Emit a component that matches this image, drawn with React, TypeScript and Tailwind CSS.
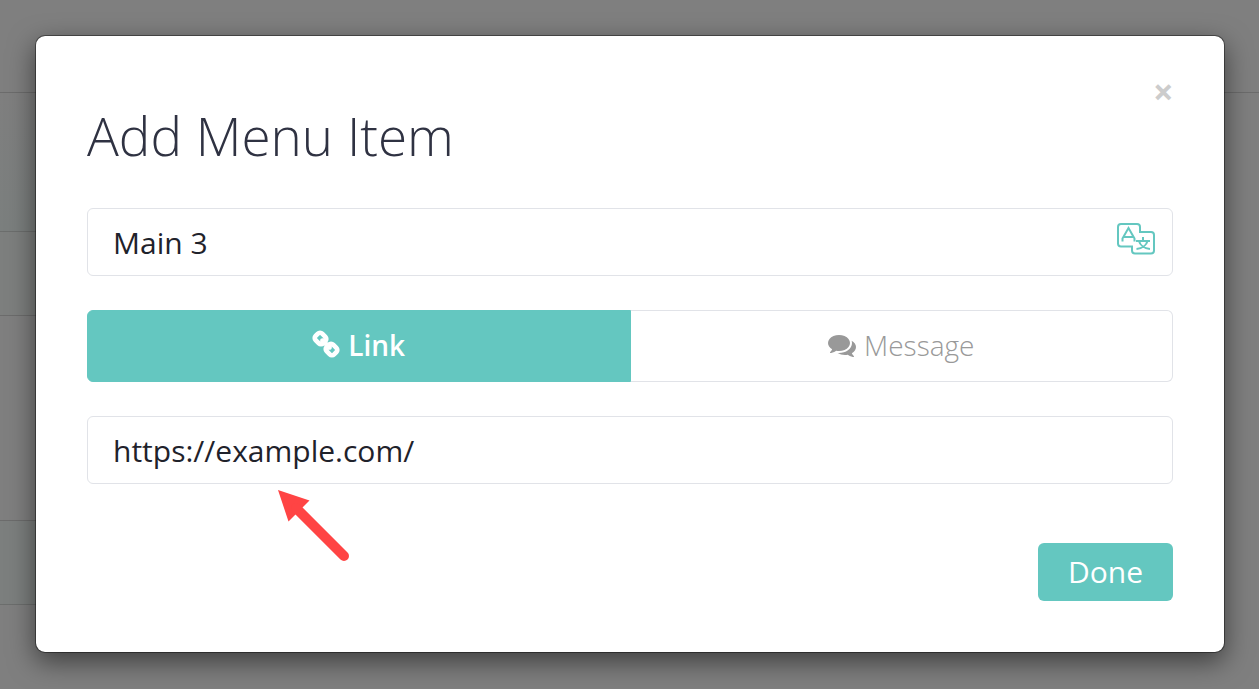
import { useState } from "react"
import type { ReactNode } from "react"
import { clsx } from "clsx"

type ItemType = "link" | "message"

const fieldClass =
  "h-17 w-full rounded-md border border-[#e1e3e8] bg-white pl-[25px] pr-20 text-3xl text-[#1f222b] outline-none"

function LinkIcon() {
  return (
    <svg viewBox="0 0 1792 1792" className="size-7 overflow-visible fill-current stroke-current" strokeWidth="110" aria-hidden="true">
      <path d="M1520 1216q0-40-28-68l-208-208q-28-28-68-28-42 0-72 32 3 3 19 18.5t21.5 21.5 15 19 13 25.5 3.5 27.5q0 40-28 68t-68 28q-15 0-27.5-3.5t-25.5-13-19-15-21.5-21.5-18.5-19q-33 31-33 73 0 40 28 68l206 207q27 27 68 27 40 0 68-26l147-146q28-28 28-67zm-703-705q0-40-28-68l-206-207q-28-28-68-28-39 0-68 27l-147 146q-28 28-28 67 0 40 28 68l208 208q27 27 68 27 42 0 72-31-3-3-19-18.5t-21.5-21.5-15-19-13-25.5-3.5-27.5q0-40 28-68t68-28q15 0 27.5 3.5t25.5 13 19 15 21.5 21.5 18.5 19q33-31 33-73zm895 705q0 120-85 203l-147 146q-83 83-203 83-121 0-204-85l-206-207q-83-83-83-203 0-123 88-209l-88-88q-86 88-208 88-120 0-204-84l-208-208q-84-84-84-204t85-203l147-146q83-83 203-83 121 0 204 85l206 207q83 83 83 203 0 123-88 209l88 88q86-88 208-88 120 0 204 84l208 208q84 84 84 204z" />
    </svg>
  )
}

function CommentsIcon() {
  return (
    <svg viewBox="0 0 1792 1792" className="size-7 fill-current" aria-hidden="true">
      <path d="M1408 768q0 139-94 257t-256.5 186.5-353.5 68.5q-86 0-176-16-124 88-278 128-36 9-86 16h-3q-11 0-20.5-8t-11.5-21q-1-3-1-6.5t.5-6.5 2-6l2.5-5 3.5-5.5 4-5 4.500-5 4-4.500q5-6 23-25t26-29.500 22.500-29 25-38.500 20.500-44q-124-72-195-177t-71-224q0-139 94-257t256.500-186.500 353.500-68.500 353.500 68.500 256.500 186.500 94 257zm384 256q0 120-71 224.500t-195 176.500q10 24 20.500 44t25 38.500 22.500 29 26 29.500 23 25q1 1 4 4.500t4.500 5 4 5 3.500 5.500l2.500 5 2 6 .5 6.500-1 6.500q-3 14-13 22t-22 7q-50-7-86-16-154-40-278-128-90 16-176 16-271 0-472-132 58 4 88 4 161 0 309-45t264-129q125-92 192-212t67-254q0-77-23-152 129 71 204 178t75 230z" />
    </svg>
  )
}

function TranslateIcon() {
  return (
    <svg viewBox="0 0 38 32" className="h-8 w-[38px]" fill="none" stroke="currentColor" strokeWidth="2" aria-hidden="true">
      <path d="M15 23.5H4a3 3 0 0 1-3-3V4a3 3 0 0 1 3-3h16a3 3 0 0 1 3 3v5h11a3 3 0 0 1 3 3v15.500a3 3 0 0 1-3 3H18a3 3 0 0 1-3-3z" />
      <path d="M5.500 18.500v-3L11.500 5l6 10.500v3M7 14h9" strokeWidth="2" />
      <path d="M26 14v3M19 18h14M22 18c1 4 5 7.500 11 8M30.500 18c-1 4-5 7.500-11 8" strokeWidth="2" />
    </svg>
  )
}

// Rows of the page left behind the modal
function PageBehind() {
  return (
    <div className="absolute inset-0 overflow-hidden bg-[#7f7f7f]" aria-hidden="true">
      <div className="h-[93px] border-b border-[#6c6c6c]" />
      <div className="w-1/2">
        <div className="h-[139px] border-b border-[#6c6e6d] bg-linear-to-b from-[#7f7f7f] to-[#7b7f7e]" />
        <div className="h-21 border-b border-[#6c6c6c] bg-[#7d7f7e]" />
        <div className="h-[205px] border-b border-[#6c6c6c]" />
        <div className="h-21 border-b border-[#6c6e6d] bg-[#7c7f7e]" />
      </div>
    </div>
  )
}

interface TypeButtonProps {
  active: boolean
  onClick: () => void
  className?: string
  children: ReactNode
}

function TypeButton({ active, onClick, className, children }: TypeButtonProps) {
  return (
    <button
      type="button"
      aria-pressed={active}
      onClick={onClick}
      className={clsx(
        "flex h-18 flex-1 items-center justify-center gap-2 border pb-0.5 text-[28px]",
        active ? "border-[#64c7c0] bg-[#64c7c0] font-semibold text-white" : "border-[#e1e3e8] bg-white font-light text-[#999]",
        className,
      )}
    >
      {children}
    </button>
  )
}

export default function App() {
  const [name, setName] = useState("Main 3")
  const [url, setUrl] = useState("https://example.com/")
  const [type, setType] = useState<ItemType>("link")

  return (
    <div className="relative min-h-screen font-['Open_Sans',sans-serif]">
      <PageBehind />

      <div className="relative py-[35px] pr-[34px] pl-[35px]">
        <div
          role="dialog"
          aria-labelledby="modal-title"
          className="rounded-[10px] border border-black/40 bg-white bg-clip-padding px-[51px] pt-10 pb-[51px] shadow-[0_9px_27px_rgba(0,0,0,0.5)]"
        >
          <div className="flex justify-end">
            <button type="button" aria-label="Close" className="h-8 w-5 text-4xl leading-8 font-bold text-[#ccc]">
              ×
            </button>
          </div>
          <h1 id="modal-title" className="mb-11 text-[53px] leading-14 font-light text-[#2f3242]">
            Add Menu Item
          </h1>

          <form className="flex flex-col gap-[34px]" onSubmit={(e) => e.preventDefault()}>
            <div className="relative">
              <input
                aria-label="Menu item name"
                value={name}
                onChange={(e) => setName(e.target.value)}
                className={fieldClass}
              />
              <button type="button" aria-label="Translate" className="absolute top-[15px] right-[18px] text-[#64c7c0]">
                <TranslateIcon />
              </button>
            </div>

            <div className="flex">
              <TypeButton active={type === "link"} onClick={() => setType("link")} className="rounded-l-md">
                <LinkIcon />
                Link
              </TypeButton>
              <TypeButton active={type === "message"} onClick={() => setType("message")} className="rounded-r-md border-l-0">
                <CommentsIcon />
                Message
              </TypeButton>
            </div>

            <div className="relative">
              <input
                aria-label="Link address"
                value={url}
                onChange={(e) => setUrl(e.target.value)}
                className={fieldClass}
              />
              {/* Arrow pointing at the address */}
              <svg
                viewBox="0 0 72 72"
                className="pointer-events-none absolute top-[74px] left-[191px] size-[72px]"
                aria-hidden="true"
              >
                <path d="M0 0L31.500 10.500L10.500 31.500z" fill="#ff4444" />
                <path d="M18 18L66 66" stroke="#ff4444" strokeWidth="10" strokeLinecap="round" />
              </svg>
            </div>

            <div className="flex justify-end pt-[25px]">
              <button type="submit" className="h-[58px] w-[135px] rounded-md bg-[#64c7c0] text-3xl text-white">
                Done
              </button>
            </div>
          </form>
        </div>
      </div>
    </div>
  )
}
